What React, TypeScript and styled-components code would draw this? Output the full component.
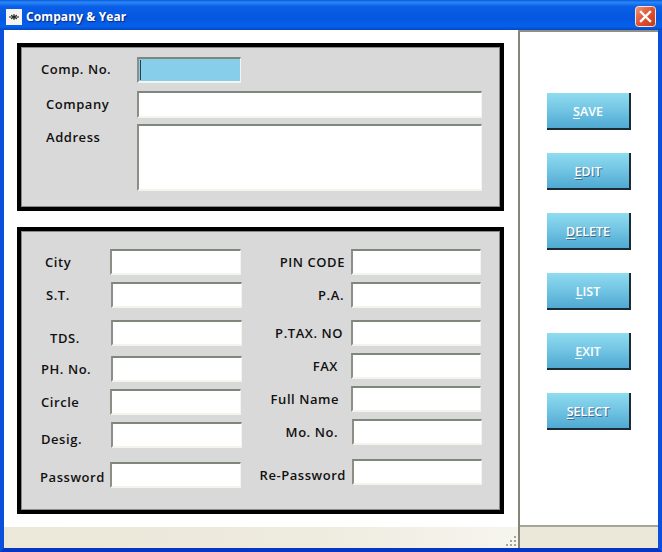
import React from 'react';
import styled, {createGlobalStyle} from 'styled-components';

const GlobalStyle = createGlobalStyle`
    html, body {
        margin: 0;
        padding: 0;
        background: #ffffff;
    }
`;

//Window frame
const Window = styled.div`
    width: 662px;
    height: 552px;
    display: flex;
    flex-direction: column;
    overflow: hidden;
    font-family: "Open Sans", "Liberation Sans", sans-serif;
`;

const TitleBar = styled.div`
    height: 30px;
    flex: none;
    display: flex;
    align-items: center;
    padding: 3px 6px 0 6px;
    box-sizing: border-box;
    background: linear-gradient(180deg, #0a5be0 0%, #2a86f5 8%, #0a5fe6 22%, #0556e0 60%, #0660ea 88%, #0348c4 100%);
`;

const AppIcon = styled.svg`
    width: 16px;
    height: 16px;
    flex: none;
`;

const TitleText = styled.span`
    margin-left: 4px;
    flex: 1;
    color: #ffffff;
    font-family: "Open Sans", sans-serif;
    font-weight: 700;
    font-size: 12px;
    letter-spacing: 0.1px;
    text-shadow: 1px 1px 1px #0a2a80;
`;

const CloseButton = styled.svg`
    width: 21px;
    height: 21px;
    flex: none;
`;

const Frame = styled.div`
    flex: 1;
    display: flex;
    min-height: 0;
    border-left: 4px solid #0a50dc;
    border-right: 4px solid #0a50dc;
    border-bottom: 4px solid #0636c4;
    background: #ffffff;
`;

//Left part with the two form panels
const Main = styled.div`
    width: 514px;
    flex: none;
    display: flex;
    flex-direction: column;
`;

const Content = styled.div`
    flex: 1;
    display: flex;
    flex-direction: column;
    gap: 16px;
    padding: 13px 0 0 13px;
`;

const Panel = styled.div<{$height: number}>`
    width: 487px;
    height: ${p => p.$height}px;
    box-sizing: border-box;
    border: 4px solid #000000;
    outline: 1px solid #8a8a8a;
    outline-offset: -5px;
    background: #d9d9d9;
    padding-left: 1px;
`;

const CompanyStack = styled.div`
    display: flex;
    flex-direction: column;
`;

const Columns = styled.div`
    display: flex;
`;

const Column = styled.div<{$width: number}>`
    width: ${p => p.$width}px;
    flex: none;
`;

const Row = styled.div<{$top: number; $shift?: number}>`
    display: flex;
    align-items: center;
    margin-top: ${p => p.$top}px;
    margin-left: ${p => p.$shift ?? 0}px;
`;

const AddressRow = styled(Row)`
    align-items: flex-start;
`;

const Label = styled.label<{$width: number; $pad: number; $drop?: number; $lift?: number; $right?: boolean}>`
    width: ${p => p.$width}px;
    flex: none;
    box-sizing: border-box;
    padding-left: ${p => (p.$right ? 0 : p.$pad)}px;
    padding-right: ${p => (p.$right ? p.$pad : 0)}px;
    padding-top: ${p => p.$drop ?? 0}px;
    padding-bottom: ${p => p.$lift ?? 0}px;
    text-align: ${p => (p.$right ? 'right' : 'left')};
    white-space: nowrap;
    color: #111111;
    font-weight: 600;
    font-size: 13px;
    letter-spacing: 0.55px;
`;

const Input = styled.input<{$width: number; $height?: number; $active?: boolean}>`
    width: ${p => p.$width}px;
    height: ${p => p.$height ?? 26}px;
    flex: none;
    box-sizing: border-box;
    margin: 0;
    padding: 0;
    border-style: solid;
    border-width: 2px 1px 2px 2px;
    border-color: #7f877c #f4f4ee #f4f4ee #8a9086;
    outline: none;
    background: ${p => (p.$active
        ? 'linear-gradient(#2c3e4a, #2c3e4a) no-repeat 1px 1px / 1px 20px, #87ceeb'
        : '#ffffff')};
`;

const AddressBox = styled.textarea`
    display: block;
    width: 345px;
    height: 67px;
    flex: none;
    box-sizing: border-box;
    margin: 0;
    padding: 0;
    resize: none;
    border-style: solid;
    border-width: 2px 1px 2px 2px;
    border-color: #7f877c #f4f4ee #f4f4ee #8a9086;
    outline: none;
    background: #ffffff;
`;

const StatusBar = styled.div`
    height: 21px;
    flex: none;
    display: flex;
    justify-content: flex-end;
    align-items: flex-end;
    background: linear-gradient(90deg, #ebe8d9 0%, #eeebdf 60%, #f6f5ee 100%);
`;

const Grip = styled.svg`
    width: 13px;
    height: 13px;
    flex: none;
`;

//Right part with the action buttons
const Side = styled.div`
    flex: 1;
    display: flex;
    flex-direction: column;
    border-left: 2px solid #85857c;
    border-top: 2px solid #8f8f86;
`;

const ButtonArea = styled.div`
    flex: 1;
    display: flex;
    flex-direction: column;
    gap: 23px;
    padding: 61px 0 0 27px;
    border-bottom: 2px solid #a5a597;
`;

const ActionButton = styled.button<{$dim?: boolean}>`
    width: 84px;
    height: 37px;
    flex: none;
    box-sizing: border-box;
    padding: 1px 0 0 0;
    border: none;
    border-right: 2px solid #1c2a33;
    border-bottom: 2px solid #1c2a33;
    background: linear-gradient(180deg, #90dcf0 0%, #74c6e4 45%, #50a9d2 100%);
    color: #ffffff;
    font-family: "Open Sans", sans-serif;
    font-size: 12.5px;
    font-weight: 600;
    text-shadow: ${p => (p.$dim ? '1px 1px 0 #3c6e8c' : 'none')};

    u {
        text-underline-offset: 2px;
    }
`;

const SideStatus = styled.div`
    height: 21px;
    flex: none;
    background: #ebe8d9;
`;

const leftRows = [
    {name: 'City', top: 18, shift: 0, pad: 23, drop: 0},
    {name: 'S.T.', top: 7, shift: 1, pad: 24, drop: 0},
    {name: 'TDS.', top: 11, shift: 1, pad: 28, drop: 10},
    {name: 'PH. No.', top: 9, shift: 1, pad: 19, drop: 0},
    {name: 'Circle', top: 7, shift: 0, pad: 19, drop: 0},
    {name: 'Desig.', top: 7, shift: 1, pad: 19, drop: 8},
    {name: 'Password', top: 14, shift: 0, pad: 18, drop: 4},
];

const rightRows = [
    {name: 'PIN CODE', top: 18, shift: 0, pad: 6, drop: 0},
    {name: 'P.A.', top: 7, shift: 0, pad: 7, drop: 0},
    {name: 'P.TAX. NO', top: 12, shift: 0, pad: 8, drop: 0},
    {name: 'FAX', top: 7, shift: 0, pad: 13, drop: 0},
    {name: 'Full Name', top: 7, shift: 0, pad: 12, drop: 0},
    {name: 'Mo. No.', top: 7, shift: 1, pad: 13, drop: 0},
    {name: 'Re-Password', top: 14, shift: 1, pad: 5, drop: 6},
];

const buttons = [
    {first: 'S', rest: 'AVE', dim: false},
    {first: 'E', rest: 'DIT', dim: true},
    {first: 'D', rest: 'ELETE', dim: true},
    {first: 'L', rest: 'IST', dim: false},
    {first: 'E', rest: 'XIT', dim: false},
    {first: 'S', rest: 'ELECT', dim: true},
];

export default function App() {
    return (
        <Window>
            <GlobalStyle/>
            <TitleBar>
                <AppIcon viewBox="0 0 16 16">
                    <rect width="16" height="16" fill="#f4f4f4"/>
                    <path d="M3 8h10M5 6l6 4M11 6l-6 4M8 5v6" stroke="#1a1a1a" strokeWidth="1"/>
                    <circle cx="8" cy="8" r="1.6" fill="#222222"/>
                </AppIcon>
                <TitleText>Company &amp; Year</TitleText>
                <CloseButton viewBox="0 0 21 21">
                    <defs>
                        <linearGradient id="closeFill" x1="0" y1="0" x2="1" y2="1">
                            <stop offset="0" stopColor="#ef9a7c"/>
                            <stop offset="0.5" stopColor="#e0512f"/>
                            <stop offset="1" stopColor="#c23a1c"/>
                        </linearGradient>
                    </defs>
                    <rect x="0.5" y="0.5" width="20" height="20" rx="3" fill="url(#closeFill)" stroke="#f2e6e0"/>
                    <path d="M6 6l9 9M15 6l-9 9" stroke="#ffffff" strokeWidth="2.4" strokeLinecap="square"/>
                </CloseButton>
            </TitleBar>
            <Frame>
                <Main>
                    <Content>
                        <Panel $height={168}>
                            <CompanyStack>
                                <Row $top={10}>
                                    <Label $width={115} $pad={19} $lift={2}>Comp. No.</Label>
                                    <Input $width={104} $active readOnly/>
                                </Row>
                                <Row $top={8}>
                                    <Label $width={115} $pad={24} $lift={2}>Company</Label>
                                    <Input $width={345} $height={27} readOnly/>
                                </Row>
                                <AddressRow $top={6}>
                                    <Label $width={115} $pad={24} $drop={4}>Address</Label>
                                    <AddressBox readOnly/>
                                </AddressRow>
                            </CompanyStack>
                        </Panel>
                        <Panel $height={287}>
                            <Columns>
                                <Column $width={224}>
                                    {leftRows.map(row => (
                                        <Row key={row.name} $top={row.top} $shift={row.shift}>
                                            <Label $width={88} $pad={row.pad - row.shift} $drop={row.drop}>{row.name}</Label>
                                            <Input $width={131} readOnly/>
                                        </Row>
                                    ))}
                                </Column>
                                <Column $width={240}>
                                    {rightRows.map(row => (
                                        <Row key={row.name} $top={row.top} $shift={row.shift}>
                                            <Label $width={105} $pad={row.pad + row.shift} $drop={row.drop} $right>{row.name}</Label>
                                            <Input $width={130} readOnly/>
                                        </Row>
                                    ))}
                                </Column>
                            </Columns>
                        </Panel>
                    </Content>
                    <StatusBar>
                        <Grip viewBox="0 0 13 13">
                            <g fill="#a8a596">
                                <rect x="9" y="1" width="2" height="2"/>
                                <rect x="5" y="5" width="2" height="2"/>
                                <rect x="9" y="5" width="2" height="2"/>
                                <rect x="1" y="9" width="2" height="2"/>
                                <rect x="5" y="9" width="2" height="2"/>
                                <rect x="9" y="9" width="2" height="2"/>
                            </g>
                        </Grip>
                    </StatusBar>
                </Main>
                <Side>
                    <ButtonArea>
                        {buttons.map(button => (
                            <ActionButton key={button.first + button.rest} $dim={button.dim}>
                                <u>{button.first}</u>{button.rest}
                            </ActionButton>
                        ))}
                    </ButtonArea>
                    <SideStatus/>
                </Side>
            </Frame>
        </Window>
    );
}
